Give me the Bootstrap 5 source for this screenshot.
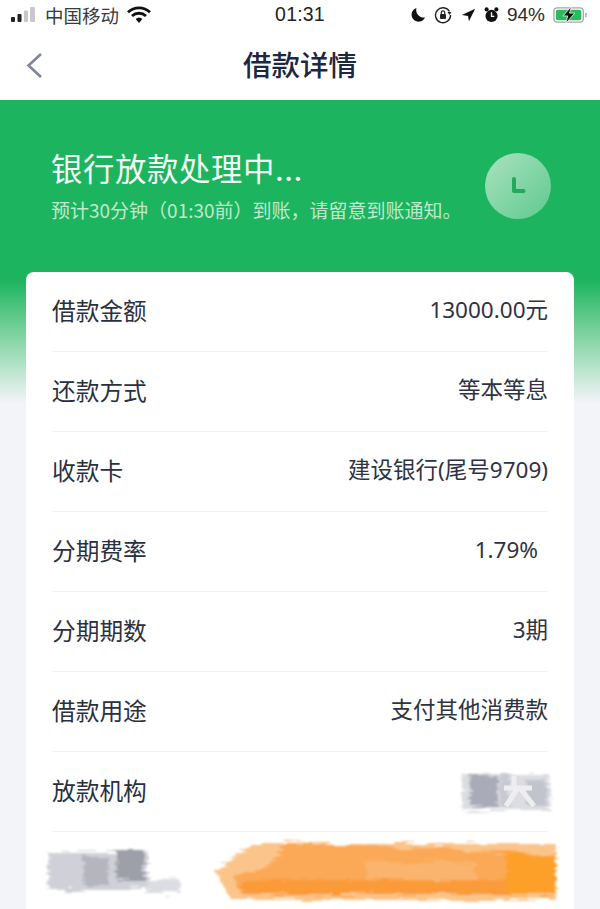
<!DOCTYPE html>
<html lang="zh"><head><meta charset="utf-8"><title>借款详情</title>
<link href="https://cdn.jsdelivr.net/npm/bootstrap@5.3.0/dist/css/bootstrap.min.css" rel="stylesheet">
<style>
html,body{height:909px;overflow:hidden;background:#f3f4f9}
body{font-family:"Liberation Sans","Noto Sans CJK SC",sans-serif;color:#222a3a}
.sbar{height:30px;padding:0 12px 0 10px;background:#fff;font-size:19px;color:#2b2b30}
.sbar .cn{font-family:"Noto Sans CJK SC",sans-serif;font-size:18.5px;color:#3a3a40;line-height:1}
.sbar .clock{font-size:19.5px;font-weight:500;letter-spacing:.2px;position:absolute;left:0;right:0;text-align:center;color:#222}
.topnav{height:70px;background:#fff;font-family:"Noto Sans CJK SC",sans-serif}
.topnav .ttl{font-size:28.5px;font-weight:500;color:#1e2740;line-height:1;margin-bottom:2px}
.hero{height:305px;background:linear-gradient(#1db45f 0,#1db45f 180px,#7fd3a0 235px,#f3f4f9 303px);padding:50px 49px 0 51px;font-family:"Noto Sans CJK SC",sans-serif;color:#fff}
.hero .h1x{font-size:31.400px;line-height:38px;letter-spacing:.6px;font-weight:400;color:#f2fbf5;margin-top:-1px}
.hero .subx{font-size:19px;line-height:22px;color:#bfeacd;margin-top:12px;white-space:nowrap;width:0}
.dial{width:66px;height:66px;border-radius:50%;background:linear-gradient(135deg,#a9e2c0,#5fc98e);margin-top:3px;flex:none}
.sheet{margin:-133px 26px 0;background:#fff;border-radius:8px 8px 0 0;padding:0 26px;position:relative;font-family:"Noto Sans CJK SC",sans-serif;font-size:23.700px;color:#2a3040}
.rowx{height:80px;border-bottom:1px solid #f2f2f4;line-height:1;padding-bottom:2px}
.rowx:first-child{height:79px}
.rowx .val{font-size:22.500px;color:#2e3344;font-family:"Noto Sans","Noto Sans CJK SC",sans-serif}
.rowx .ind{padding-right:10px}
.smear{display:block;overflow:visible}
.smearrow{height:80px;position:relative}
.over{position:absolute;left:0;top:0;pointer-events:none}
</style></head>
<body>
<div class="sbar d-flex align-items-center justify-content-between position-relative">
  <div class="d-flex align-items-center gap-2">
    <svg width="27" height="18" viewBox="0 0 27 18"><rect x="1" y="11" width="4" height="5" rx="1" fill="#222"/><rect x="7.500" y="8" width="4" height="8" rx="1" fill="#222"/><rect x="14" y="4.500" width="4" height="11.500" rx="1" fill="#c8c8cc"/><rect x="20" y="1" width="5" height="15" rx="1" fill="#c8c8cc"/></svg>
    <span class="cn">中国移动</span>
    <svg width="24" height="18" viewBox="0 0 24 18"><path d="M1 6.200a16 16 0 0 1 22 0" fill="none" stroke="#111" stroke-width="2.800"/><path d="M5 10a10.300 10.300 0 0 1 14 0" fill="none" stroke="#111" stroke-width="2.800"/><path d="M8.600 13a5 5 0 0 1 6.800 0L12 17z" fill="#111"/></svg>
  </div>
  <div class="clock">01:31</div>
  <div class="d-flex align-items-center gap-2 position-relative">
    <svg width="16" height="16" viewBox="0 0 16 16"><path d="M6.500 1a7 7 0 1 0 8.500 9.500A7.500 7.500 0 0 1 6.500 1z" fill="#111"/></svg>
    <svg width="19" height="18" viewBox="0 0 19 18"><path d="M15.500 5.500A7.500 7.500 0 1 0 16.500 9" fill="none" stroke="#222" stroke-width="1.400"/><path d="M13.500 6h4l-2 3z" fill="#222"/><rect x="6" y="8" width="6" height="5" rx="1" fill="#222"/><path d="M7.300 8V6.500a1.700 1.700 0 0 1 3.400 0V8" fill="none" stroke="#222" stroke-width="1.200"/></svg>
    <svg width="15" height="16" viewBox="0 0 17 16"><path d="M16 1 1 8l7 1 1 6z" fill="#111"/></svg>
    <svg width="15" height="18" viewBox="0 0 16 18"><circle cx="8" cy="10" r="6.500" fill="#111"/><circle cx="2.800" cy="3" r="2.200" fill="#111"/><circle cx="13.200" cy="3" r="2.200" fill="#111"/><path d="M8 6v4.500h3" fill="none" stroke="#fff" stroke-width="1.400"/></svg>
    <span>94%</span>
    <svg width="35" height="18" viewBox="0 0 37 18"><rect x="1" y="1.500" width="31" height="15" rx="3.500" fill="none" stroke="#a5a8a8" stroke-width="1.400"/><rect x="3" y="3.500" width="27" height="11" rx="2" fill="#2db95f"/><rect x="34" y="6.500" width="1.500" height="5" rx=".7" fill="#a5a8a8"/><path d="M19.500 0 10.500 10h5l-2 8 9.500-11h-5.500z" fill="#111" stroke="#fff" stroke-width=".8"/></svg>
  </div>
</div>
<div class="topnav d-flex align-items-center justify-content-center position-relative">
  <svg class="position-absolute over" style="left:25px;top:20px" width="20" height="30" viewBox="0 0 20 30"><path d="M16 4 3.500 15.500 16 27" fill="none" stroke="#7f8694" stroke-width="2.600"/></svg>
  <div class="ttl">借款详情</div>
</div>
<div class="hero d-flex justify-content-between align-items-start">
  <div>
    <div class="h1x">银行放款处理中...</div>
    <div class="subx">预计30分钟（01:30前）到账，请留意到账通知。</div>
  </div>
  <div class="dial d-flex align-items-center justify-content-center">
    <svg width="20" height="20" viewBox="0 0 20 20"><path d="M6 3v12h9.500" fill="none" stroke="#23a85c" stroke-width="4" stroke-linecap="round" stroke-linejoin="round"/></svg>
  </div>
</div>
<div class="sheet">
  <svg width="0" height="0" class="position-absolute"><defs><filter id="bl" x="-20%" y="-40%" width="140%" height="180%"><feTurbulence type="fractalNoise" baseFrequency=".03 .5" numOctaves="2" seed="4"/><feDisplacementMap in="SourceGraphic" scale="12"/><feGaussianBlur stdDeviation="1.300"/></filter></defs></svg>
  <div class="rowx d-flex align-items-center justify-content-between"><span>借款金额</span><span class="val">13000.00元</span></div>
  <div class="rowx d-flex align-items-center justify-content-between"><span>还款方式</span><span class="val">等本等息</span></div>
  <div class="rowx d-flex align-items-center justify-content-between"><span>收款卡</span><span class="val">建设银行(尾号9709)</span></div>
  <div class="rowx d-flex align-items-center justify-content-between"><span>分期费率</span><span class="val ind">1.79%</span></div>
  <div class="rowx d-flex align-items-center justify-content-between"><span>分期期数</span><span class="val">3期</span></div>
  <div class="rowx d-flex align-items-center justify-content-between"><span>借款用途</span><span class="val">支付其他消费款</span></div>
  <div class="rowx d-flex align-items-center justify-content-between"><span>放款机构</span>
    <svg class="smear" width="88" height="46" viewBox="0 0 88 46"><g filter="url(#bl)"><rect x="2" y="6" width="88" height="36" fill="#dcdde2"/><rect x="10" y="8" width="28" height="30" fill="#a9abb8"/><rect x="40" y="4" width="10" height="34" fill="#c8c9d1"/><rect x="66" y="12" width="20" height="24" fill="#c2c4cd"/></g><path d="M54 8v12M44 20h28M58 20 46 38M60 20l14 18" stroke="#eeeef1" stroke-width="5" fill="none"/></svg>
  </div>
  <div class="smearrow">
    <svg class="over" style="left:-26px" width="548" height="80" viewBox="0 0 548 80">
      <g filter="url(#bl)">
        <rect x="22" y="20" width="100" height="38" fill="#d0d1d8"/><rect x="90" y="18" width="28" height="30" fill="#9d9fa9"/><rect x="58" y="24" width="24" height="30" fill="#b4b5bf"/><rect x="122" y="48" width="32" height="12" fill="#dcdde2"/>
        <polygon points="190,40 225,12 530,12 530,68 205,68" fill="#fbc48a"/><polygon points="206,44 240,36 262,10 530,22 530,62 215,62" fill="#fba956"/><rect x="340" y="30" width="110" height="26" fill="#fbb46d"/><rect x="216" y="48" width="314" height="14" fill="#fb9a38"/><rect x="480" y="22" width="50" height="40" fill="#fda02c"/>
      </g>
    </svg>
  </div>
</div>
<script src="https://cdn.jsdelivr.net/npm/bootstrap@5.3.0/dist/js/bootstrap.bundle.min.js"></script>
</body></html>
